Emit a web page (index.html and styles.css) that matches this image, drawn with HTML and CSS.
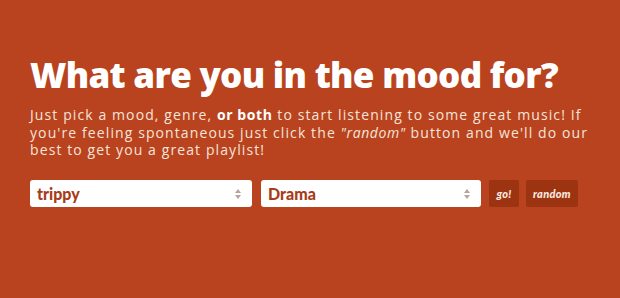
FILE: index.html
```html
<!DOCTYPE html>
<html lang="en">
<head>
<meta charset="utf-8">
<title>What are you in the mood for?</title>
<link rel="stylesheet" href="styles.css">
</head>
<body>
<main class="intro">
  <h1 class="title">What are you in the mood for?</h1>
  <p class="lead">Just pick a mood, genre, <strong>or both</strong> to start listening to some great music! If you're feeling spontaneous just click the <em>"random"</em> button and we'll do our best to get you a great playlist!</p>
  <form class="picker">
    <div class="select-wrap mood">
      <select class="select"><option>trippy</option></select>
      <svg class="arrows" width="6" height="10" viewBox="0 0 6 10"><path d="M3 0L6 4H0Z M3 10L6 6H0Z" fill="#b8a39a"/></svg>
    </div>
    <div class="select-wrap genre">
      <select class="select"><option>Drama</option></select>
      <svg class="arrows" width="6" height="10" viewBox="0 0 6 10"><path d="M3 0L6 4H0Z M3 10L6 6H0Z" fill="#b8a39a"/></svg>
    </div>
    <button type="button" class="btn go">go!</button>
    <button type="button" class="btn random">random</button>
  </form>
</main>
</body>
</html>
```

FILE: styles.css
```css
html, body {
  margin: 0;
  padding: 0;
  background: #b8431e;
  height: 100%;
}
.intro {
  padding: 57px 0 0 30px;
  font-family: "Open Sans", "Lato", sans-serif;
}
.title {
  margin: 0;
  font-size: 35px;
  line-height: 35px;
  font-weight: 800;
  color: #fff;
  letter-spacing: -0.7px;
}
.lead {
  margin: 14px 0 0;
  width: 562px;
  font-size: 14px;
  line-height: 17.5px;
  color: #f7e4da;
  letter-spacing: 1.1px;
}
.lead strong { font-weight: 700; color: #fff; letter-spacing: 0.6px; }
.lead em { font-style: italic; letter-spacing: 0.6px; }
.picker {
  display: flex;
  align-items: stretch;
  margin-top: 21px;
  height: 27px;
}
.select-wrap {
  position: relative;
  background: #fff;
  border-radius: 3px;
  margin-right: 9px;
}
.mood { width: 222px; }
.genre { width: 220px; margin-right: 8px; }
.select {
  appearance: none;
  -webkit-appearance: none;
  border: 0;
  background: transparent;
  width: 100%;
  height: 100%;
  padding: 0 0 0 7px;
  font-family: "Lato", "Open Sans", sans-serif;
  font-weight: 900;
  font-size: 16px;
  color: #a83c19;
  outline: none;
}
.arrows {
  position: absolute;
  right: 11px;
  top: 9px;
}
.btn {
  border: 0;
  border-radius: 2px;
  background: #9c3311;
  color: #fbe9e0;
  font-family: "Lato", "Open Sans", sans-serif;
  font-weight: 900;
  font-style: italic;
  font-size: 11px;
  padding: 0;
  margin-right: 7px;
  letter-spacing: 0.3px;
}
.go { width: 30px; }
.random { width: 52px; }
```
